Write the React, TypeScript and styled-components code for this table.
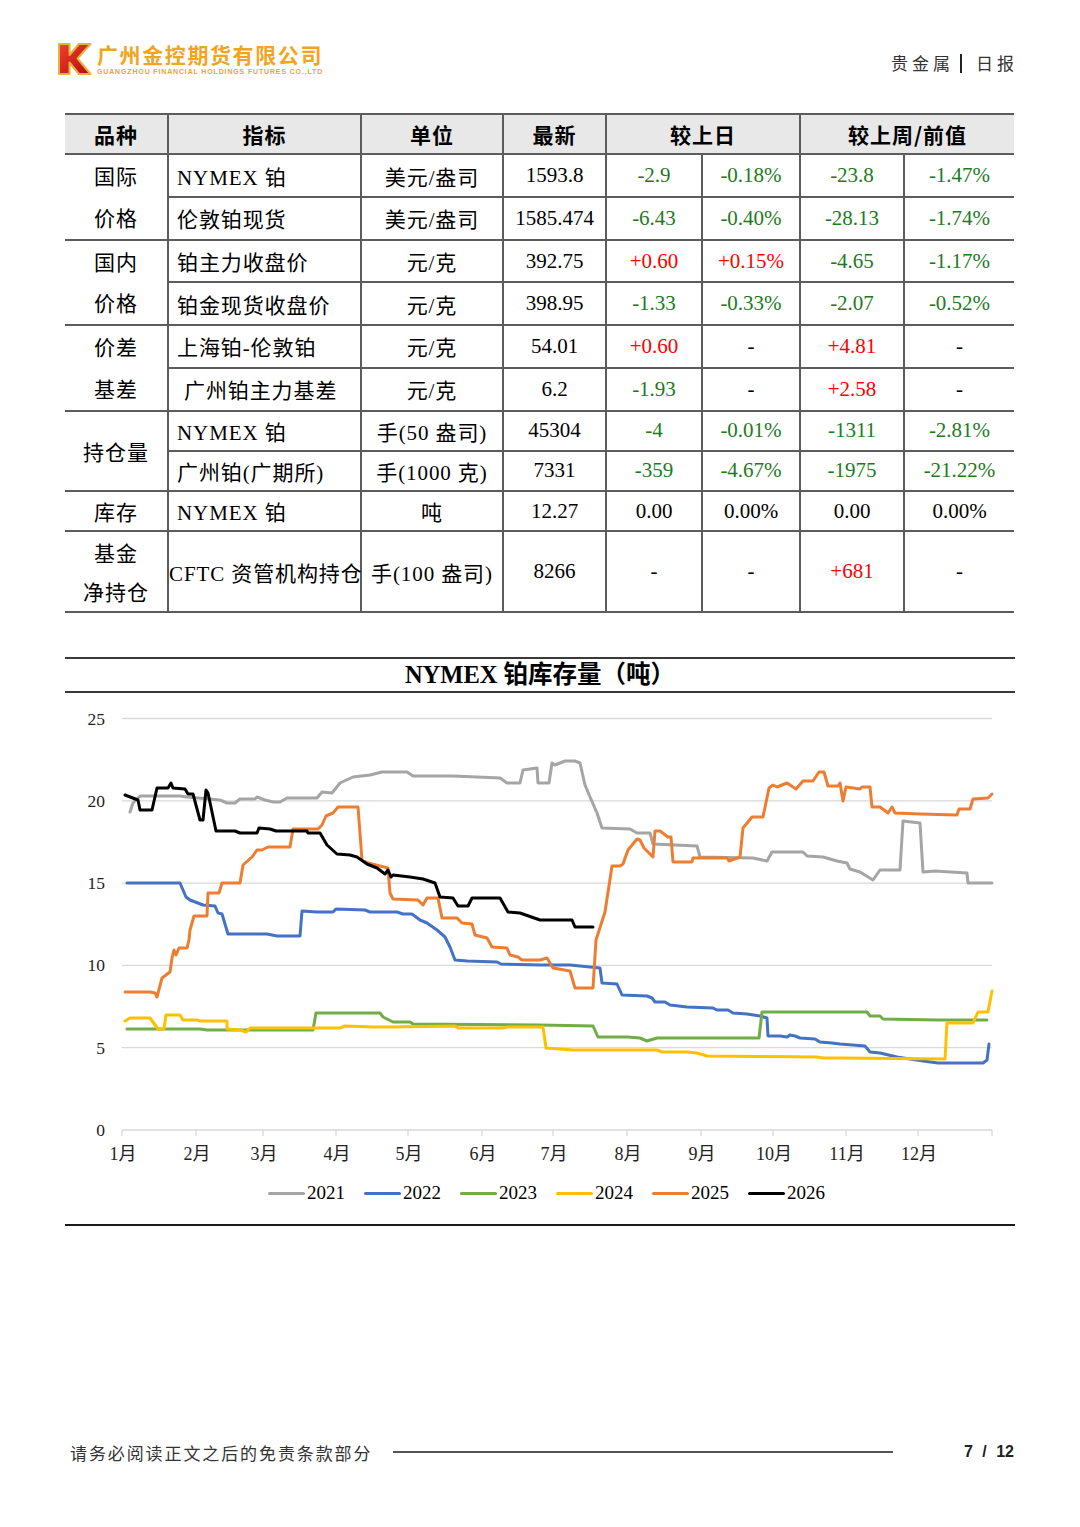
import styled, { createGlobalStyle } from "styled-components";

const SERIF = `"Liberation Serif", "Noto Sans CJK SC", serif`;
const SANS = `"Noto Sans CJK SC", "Liberation Sans", sans-serif`;

const GlobalStyle = createGlobalStyle`
  body {
    margin: 0;
    background: #fff;
  }
`;

const Page = styled.div`
  width: 1080px;
  height: 1527px;
  display: flex;
  flex-direction: column;
  background: #fff;
  color: #000;
  font-family: ${SERIF};
`;

/* ---------- header ---------- */
const Header = styled.header`
  height: 113px;
  box-sizing: border-box;
  padding: 42px 62px 0 57px;
  display: flex;
  justify-content: space-between;
  align-items: flex-start;
`;
const Brand = styled.div`
  display: flex;
  align-items: flex-start;
  gap: 5px;
`;
const BrandText = styled.div`
  display: flex;
  flex-direction: column;
  color: #f0a51f;
`;
const BrandName = styled.div`
  font-family: ${SANS};
  font-weight: 700;
  font-size: 21px;
  line-height: 24px;
  letter-spacing: 1.6px;
`;
const BrandSub = styled.div`
  font-family: "Liberation Sans", sans-serif;
  font-weight: 700;
  font-size: 7px;
  line-height: 9px;
  letter-spacing: 0.85px;
  margin-top: 1px;
  white-space: nowrap;
`;
const Section = styled.div`
  margin-top: 10px;
  display: flex;
  align-items: center;
  font-family: ${SANS};
  font-size: 17px;
  line-height: 22px;
  letter-spacing: 4px;
  color: #333;
`;
const Bar = styled.span`
  width: 2px;
  height: 19px;
  background: #222;
  margin: 0 14px 0 6px;
`;

/* ---------- table ---------- */
const Table = styled.table`
  margin-left: 65px;
  width: 949px;
  border-collapse: collapse;
  table-layout: fixed;
  font-family: ${SERIF};
  font-size: 21px;
  border-left: hidden;
  border-right: hidden;
`;
const Th = styled.th`
  background: #e8e8e8;
  border: 2px solid #5c5c5c;
  font-family: ${SANS};
  font-weight: 700;
  letter-spacing: 1px;
  height: 38.3px;
  padding: 0;
  line-height: 36px;
`;
const Td = styled.td<{ $tone?: "up" | "down"; $align?: "left" | "center"; $cjk?: boolean; $indent?: number }>`
  border: 2px solid #5c5c5c;
  height: 38.3px;
  padding: 0 0 0 ${(p) => (p.$align === "left" ? `${p.$indent ?? 8}px` : "0")};
  text-align: ${(p) => p.$align ?? "center"};
  white-space: nowrap;
  overflow: visible;
  letter-spacing: ${(p) => (p.$cjk ? "0.9px" : "0")};
  color: ${(p) => (p.$tone === "up" ? "#ff0000" : p.$tone === "down" ? "#1e7a1e" : "#000")};
`;
const GroupCell = styled.td<{ $lh: number }>`
  border: 2px solid #5c5c5c;
  padding: 0;
  text-align: center;
  font-family: ${SANS};
  letter-spacing: 1px;
  line-height: ${(p) => p.$lh}px;
`;

type Row = {
  name: string;
  indent?: number;
  unit: string;
  last: string;
  vals: string[];
  tall?: boolean;
};
type Group = { label: string[]; lh: number; rows: Row[] };

const groups: Group[] = [
  {
    label: ["国际", "价格"],
    lh: 41.7,
    rows: [
      { name: "NYMEX 铂", unit: "美元/盎司", last: "1593.8", vals: ["-2.9", "-0.18%", "-23.8", "-1.47%"] },
      { name: "伦敦铂现货", unit: "美元/盎司", last: "1585.474", vals: ["-6.43", "-0.40%", "-28.13", "-1.74%"] },
    ],
  },
  {
    label: ["国内", "价格"],
    lh: 41.7,
    rows: [
      { name: "铂主力收盘价", unit: "元/克", last: "392.75", vals: ["+0.60", "+0.15%", "-4.65", "-1.17%"] },
      { name: "铂金现货收盘价", unit: "元/克", last: "398.95", vals: ["-1.33", "-0.33%", "-2.07", "-0.52%"] },
    ],
  },
  {
    label: ["价差", "基差"],
    lh: 41.7,
    rows: [
      { name: "上海铂-伦敦铂", unit: "元/克", last: "54.01", vals: ["+0.60", "-", "+4.81", "-"] },
      { name: "广州铂主力基差", indent: 15, unit: "元/克", last: "6.2", vals: ["-1.93", "-", "+2.58", "-"] },
    ],
  },
  {
    label: ["持仓量"],
    lh: 30,
    rows: [
      { name: "NYMEX 铂", unit: "手(50 盎司)", last: "45304", vals: ["-4", "-0.01%", "-1311", "-2.81%"] },
      { name: "广州铂(广期所)", unit: "手(1000 克)", last: "7331", vals: ["-359", "-4.67%", "-1975", "-21.22%"] },
    ],
  },
  {
    label: ["库存"],
    lh: 30,
    rows: [{ name: "NYMEX 铂", unit: "吨", last: "12.27", vals: ["0.00", "0.00%", "0.00", "0.00%"] }],
  },
  {
    label: ["基金", "净持仓"],
    lh: 39,
    rows: [
      { name: "CFTC 资管机构持仓", indent: 0, unit: "手(100 盎司)", last: "8266", vals: ["-", "-", "+681", "-"], tall: true },
    ],
  },
];

const toneOf = (v: string): "up" | "down" | undefined =>
  v.startsWith("+") ? "up" : /^-\d/.test(v) ? "down" : undefined;

const cols = [103, 193, 142, 103, 96, 98, 104, 110];

const DataTable = () => (
  <Table>
    <colgroup>
      {cols.map((w, i) => (
        <col key={i} style={{ width: w }} />
      ))}
    </colgroup>
    <thead>
      <tr>
        <Th>品种</Th>
        <Th>指标</Th>
        <Th>单位</Th>
        <Th>最新</Th>
        <Th colSpan={2}>较上日</Th>
        <Th colSpan={2}>较上周/前值</Th>
      </tr>
    </thead>
    <tbody>
      {groups.map((g) =>
        g.rows.map((r, i) => (
          <tr key={g.label.join() + i}>
            {i === 0 && (
              <GroupCell rowSpan={g.rows.length} $lh={g.lh}>
                {g.label.map((l) => (
                  <div key={l}>{l}</div>
                ))}
              </GroupCell>
            )}
            <Td $align="left" $cjk $indent={r.indent} style={r.tall ? { height: 79 } : undefined}>
              {r.name}
            </Td>
            <Td $cjk>{r.unit}</Td>
            <Td>{r.last}</Td>
            {r.vals.map((v, k) => (
              <Td key={k} $tone={toneOf(v)}>
                {v}
              </Td>
            ))}
          </tr>
        ))
      )}
    </tbody>
  </Table>
);

/* ---------- chart ---------- */
const ChartSection = styled.section`
  margin: 44px 0 0 65px;
  width: 950px;
  border-bottom: 2px solid #1a1a1a;
  padding-bottom: 11px;
`;
const ChartTitle = styled.h2`
  margin: 0;
  height: 36px;
  box-sizing: border-box;
  border-top: 2px solid #3a3a3a;
  border-bottom: 2px solid #3a3a3a;
  text-align: center;
  font-family: ${SERIF};
  font-weight: 700;
  font-size: 24.5px;
  line-height: 32px;
`;
const Legend = styled.div`
  display: flex;
  justify-content: center;
  gap: 19px;
  padding-left: 13px;
  height: 40px;
  align-items: center;
`;
const LegendItem = styled.span<{ $color: string }>`
  display: inline-flex;
  align-items: center;
  gap: 2px;
  font-family: ${SERIF};
  font-size: 19px;
  &::before {
    content: "";
    width: 37px;
    height: 3px;
    border-radius: 2px;
    background: ${(p) => p.$color};
  }
`;

const series = [
  {
    year: "2021",
    color: "#a5a5a5",
    pts: "130,812 133,803 140,796 180,796 187,797 220,800 227,803 235,803 240,799 255,799 257,797 265,800 273,802 280,802 287,798 317,798 322,792 332,793 340,783 353,777 370,775 382,772 407,772 413,776 453,776 477,777 500,778 507,783 520,783 523,770 537,768 538,783 549,783 552,763 555,765 565,761 575,761 580,763 585,785 590,797 597,813 602,828 630,829 637,833 650,833 653,844 697,846 700,857 753,858 767,861 772,852 803,852 807,856 823,857 837,861 847,863 850,869 860,872 873,880 880,870 900,870 903,821 920,823 923,872 935,871 967,873 968,883 992,883",
  },
  {
    year: "2022",
    color: "#4472c4",
    pts: "127,883 180,883 186,897 190,900 203,905 215,906 218,913 222,914 228,934 267,934 277,936 300,936 302,911 317,912 333,912 336,909 365,910 370,912 397,912 403,914 412,914 420,920 427,923 437,930 445,937 450,947 455,960 467,961 497,962 501,964 540,965 570,965 590,967 600,968 602,983 617,984 622,995 647,996 652,998 655,1002 665,1002 670,1005 687,1007 713,1008 717,1010 728,1010 733,1013 747,1014 760,1016 767,1018 768,1036 780,1036 787,1037 790,1035 795,1036 800,1038 815,1039 820,1042 832,1043 840,1044 865,1046 870,1052 880,1053 897,1057 923,1061 938,1063 983,1063 987,1060 989,1044",
  },
  {
    year: "2023",
    color: "#70ad47",
    pts: "127,1029 200,1029 207,1030 313,1030 316,1013 380,1013 383,1017 393,1022 410,1022 413,1024 540,1025 593,1026 598,1037 627,1037 640,1038 647,1041 657,1038 759,1038 762,1012 867,1012 870,1016 880,1016 883,1019 937,1020 987,1020",
  },
  {
    year: "2024",
    color: "#ffc000",
    pts: "125,1021 130,1018 150,1018 158,1029 164,1029 166,1015 180,1015 183,1020 197,1020 200,1021 227,1021 227,1029 240,1030 246,1032 250,1028 340,1028 345,1026 373,1027 393,1027 455,1026 458,1028 503,1028 507,1027 543,1027 546,1048 573,1050 657,1050 662,1052 687,1052 697,1053 707,1056 817,1057 823,1058 840,1058 945,1059 947,1023 973,1023 978,1012 988,1012 992,991",
  },
  {
    year: "2025",
    color: "#ed7d31",
    pts: "125,992 150,992 155,993 157,997 162,978 170,972 172,958 174,950 176,955 179,948 187,948 189,940 190,930 194,916 207,916 208,893 219,893 222,883 240,883 243,865 252,857 257,850 262,850 268,847 290,847 293,829 318,829 322,825 326,816 333,813 338,807 358,807 362,860 368,863 388,868 390,893 393,899 418,900 423,905 427,898 438,898 442,918 457,918 462,923 472,924 475,935 487,938 492,947 507,948 510,955 518,957 522,960 540,960 547,958 553,968 570,971 575,988 593,988 596,940 605,912 612,866 620,866 623,864 628,850 637,839 640,840 644,848 653,857 655,831 660,831 668,837 671,837 673,862 692,862 693,858 727,858 729,861 740,857 743,828 752,817 763,817 769,788 773,785 777,787 787,783 796,789 803,781 813,781 819,772 824,772 828,786 838,786 840,783 843,801 846,787 860,789 862,787 870,787 872,807 880,807 888,813 892,807 895,813 920,814 957,815 959,809 970,809 973,799 988,798 992,794",
  },
  {
    year: "2026",
    color: "#000000",
    pts: "125,795 138,800 140,810 152,810 157,788 168,788 171,783 173,788 185,789 188,794 193,794 200,820 203,820 206,790 208,793 216,831 235,831 240,833 257,833 259,828 270,829 276,831 307,831 308,833 320,833 327,845 337,854 350,855 357,857 367,864 377,868 385,874 388,870 391,877 393,875 410,877 423,879 435,883 440,897 453,898 458,906 468,906 472,898 500,898 508,912 520,913 540,920 572,920 575,927 593,927",
  },
];

const yTicks = [0, 5, 10, 15, 20, 25];
const yOf = (v: number) => 1130 - v * 16.46;
const monthX = [122, 196, 263, 336, 408, 482, 553, 627, 701, 773, 846, 918, 992];

const Chart = () => (
  <svg width="950" height="480" viewBox="65 693 950 480" style={{ display: "block" }}>
    {yTicks.map((v) => (
      <g key={v}>
        <line x1={122} x2={992} y1={yOf(v)} y2={yOf(v)} stroke="#d9d9d9" strokeWidth={1.3} />
        <text
          x={105}
          y={yOf(v) + 6}
          textAnchor="end"
          fontFamily={SERIF}
          fontSize={17.5}
          fill="#222"
        >
          {v}
        </text>
      </g>
    ))}
    {monthX.map((x) => (
      <line key={x} x1={x} x2={x} y1={1130} y2={1136} stroke="#d9d9d9" strokeWidth={1.3} />
    ))}
    {monthX.slice(0, 12).map((x, i) => (
      <text key={i} x={x + 1} y={1160} textAnchor="middle" fontFamily={SERIF} fontSize={18} fill="#222">
        {i + 1}月
      </text>
    ))}
    {series.map((s) => (
      <polyline
        key={s.year}
        points={s.pts}
        fill="none"
        stroke={s.color}
        strokeWidth={3}
        strokeLinejoin="round"
        strokeLinecap="round"
      />
    ))}
  </svg>
);

/* ---------- footer ---------- */
const Footer = styled.footer`
  margin-top: auto;
  padding: 0 66px 63px 70px;
  height: 24px;
  display: flex;
  align-items: center;
`;
const Disclaimer = styled.span`
  font-family: ${SANS};
  font-size: 17px;
  letter-spacing: 1.9px;
  color: #333;
  white-space: nowrap;
`;
const FooterRule = styled.span`
  width: 500px;
  height: 2px;
  background: #555;
  margin-left: 21px;
`;
const PageNo = styled.span`
  margin-left: auto;
  font-family: "Liberation Sans Narrow", "Liberation Sans", sans-serif;
  font-weight: 700;
  font-size: 16px;
  word-spacing: 5px;
  color: #222;
  white-space: pre;
`;

const K = () => (
  <svg width="35" height="34" viewBox="0 0 35 34">
    <defs>
      <linearGradient id="kfill" x1="0" y1="0" x2="1" y2="1">
        <stop offset="0" stopColor="#f2402e" />
        <stop offset="1" stopColor="#b30c0c" />
      </linearGradient>
    </defs>
    <path
      d="M2 2 H12.5 V13 L22 2 H33.5 L20.5 16.5 L33.5 32 H22 L12.5 20.5 V32 H2 Z"
      fill="url(#kfill)"
      stroke="#e6b13d"
      strokeWidth="2"
      strokeLinejoin="round"
    />
  </svg>
);

export default function App() {
  return (
    <Page>
      <GlobalStyle />
      <Header>
        <Brand>
          <K />
          <BrandText>
            <BrandName>广州金控期货有限公司</BrandName>
            <BrandSub>GUANGZHOU FINANCIAL HOLDINGS FUTURES CO.,LTD</BrandSub>
          </BrandText>
        </Brand>
        <Section>
          贵金属
          <Bar />
          日报
        </Section>
      </Header>
      <DataTable />
      <ChartSection>
        <ChartTitle>NYMEX 铂库存量（吨）</ChartTitle>
        <Chart />
        <Legend>
          {series.map((s) => (
            <LegendItem key={s.year} $color={s.color}>
              {s.year}
            </LegendItem>
          ))}
        </Legend>
      </ChartSection>
      <Footer>
        <Disclaimer>请务必阅读正文之后的免责条款部分</Disclaimer>
        <FooterRule />
        <PageNo>7 / 12</PageNo>
      </Footer>
    </Page>
  );
}
